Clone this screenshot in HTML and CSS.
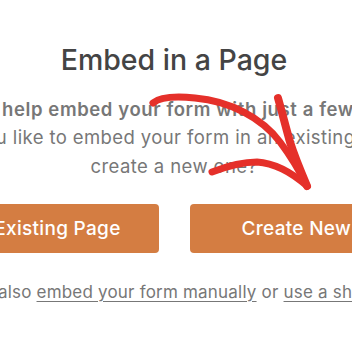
FILE: index.html
```html
<!DOCTYPE html>
<html>
<head>
<meta charset="utf-8">
<link rel="stylesheet" href="styles.css">
</head>
<body>
<div class="stage">
  <div class="modal">
    <h1 class="title">Embed in a Page</h1>
    <p class="lead">We can help embed your form with just a few clicks!</p>
    <p class="question">Would you like to embed your form in an existing page, or<br>create a new one?</p>
    <div class="actions">
      <button class="btn">Select Existing Page</button>
      <button class="btn">Create New Page</button>
    </div>
    <p class="note">You can also <a href="#">embed your form manually</a> or <a href="#">use a shortcode</a>.</p>
  </div>
  <svg class="arrow" width="352" height="345" viewBox="0 0 352 345">
    <path class="main" d="M153 103 C 160 97, 175 96, 195 98 C 230 101, 262 118, 280 142 C 292 158, 300 172, 307 186" />
    <path class="arm" d="M278 98 C 282 112, 286 128, 290 142 C 295 158, 301 172, 307 186" />
    <path d="M212 172 C 225 167, 242 162, 257 162 C 273 163, 290 171, 307 186" />
  </svg>
</div>
</body>
</html>
```
FILE: styles.css
```css
html, body {
  margin: 0;
  padding: 0;
  background: #ffffff;
}
.stage {
  position: relative;
  width: 352px;
  height: 345px;
  overflow: hidden;
  font-family: Inter, "Noto Sans", "DejaVu Sans", sans-serif;
}
.modal {
  width: 700px;
  margin-left: -176px;
  padding-top: 42px;
  text-align: center;
}
.title {
  margin: 0;
  font-size: 28.5px;
  line-height: 36px;
  font-weight: 500;
  color: #444444;
}
.lead {
  margin: 17px 0 0;
  font-size: 18.5px;
  line-height: 28px;
  font-weight: 600;
  letter-spacing: 0.6px;
  color: #777777;
}
.question {
  margin: 0;
  font-size: 18.5px;
  line-height: 29px;
  font-weight: 400;
  letter-spacing: 0.4px;
  color: #777777;
}
.actions {
  display: flex;
  justify-content: center;
  gap: 31px;
  margin-top: 23px;
}
.btn {
  width: 266px;
  height: 49px;
  border: none;
  border-radius: 4px;
  background: #d47d42;
  color: #ffffff;
  font-family: inherit;
  font-size: 19px;
  font-weight: 500;
  letter-spacing: 0.3px;
  padding: 0;
}
.note {
  margin: 27px 0 0;
  font-size: 17px;
  line-height: 24px;
  letter-spacing: 0.2px;
  color: #777777;
}
.note a {
  color: #777777;
  text-decoration: underline;
  text-underline-offset: 3px;
}
.arrow {
  position: absolute;
  left: 0;
  top: 0;
  pointer-events: none;
}
.arrow path {
  fill: none;
  stroke: #e5302a;
  stroke-width: 7;
  stroke-linecap: round;
  stroke-linejoin: round;
}
.arrow .arm {
  stroke-width: 8;
}
```
